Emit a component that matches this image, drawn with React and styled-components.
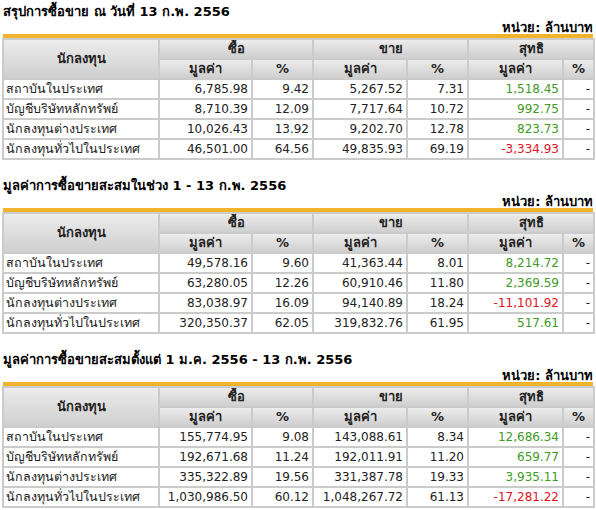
import React from "react"
import styled, { createGlobalStyle } from "styled-components"

const GlobalStyle = createGlobalStyle`
  body {
    margin: 0;
    padding: 3px 3px 0 2px;
    background: #ffffff;
    font-family: "DejaVu Sans", "Liberation Sans", "Noto Sans", sans-serif;
    font-size: 12px;
    color: #000;
  }
`

const Section = styled.section`
  margin-bottom: 17px;
`

const Title = styled.h2`
  margin: 0 0 0 1px;
  font-size: 13px;
  font-weight: bold;
  line-height: 18px;
  height: 18px;
`

const Unit = styled.div`
  text-align: right;
  font-weight: bold;
  font-size: 13px;
  line-height: 13px;
  height: 13px;
`

const Rule = styled.div`
  height: 4px;
  background: #f0b32c;
  margin-left: 1px;
`

const Table = styled.table`
  width: 591px;
  border-collapse: separate;
  border-spacing: 2px;
  background: #cbcbcb;
  table-layout: fixed;
`

const Th = styled.th`
  background: linear-gradient(#ececec, #cfcfcf);
  font-weight: bold;
  font-size: 13px;
  height: ${(p) => (p.$tall ? "38px" : "18px")};
  line-height: 16px;
  padding: 0;
  text-align: center;
  color: #222;
  overflow: hidden;
`

const Td = styled.td`
  background: #fff;
  height: 18px;
  line-height: 16px;
  padding: 0 3px 0 2px;
  font-size: ${(p) => (p.$left ? "12.5px" : "12px")};
  text-align: ${(p) => (p.$left ? "left" : "right")};
  color: ${(p) => p.$color || "#222"};
  white-space: nowrap;
  overflow: hidden;
`

const widths = [154, 91, 59, 92, 59, 93, 29]

const netColor = (v) => (v.startsWith("-") ? "#e0141e" : "#3f9a26")

const data = [
  {
    title: "สรุปการซื้อขาย ณ วันที่ 13 ก.พ. 2556",
    rows: [
      ["สถาบันในประเทศ", "6,785.98", "9.42", "5,267.52", "7.31", "1,518.45"],
      ["บัญชีบริษัทหลักทรัพย์", "8,710.39", "12.09", "7,717.64", "10.72", "992.75"],
      ["นักลงทุนต่างประเทศ", "10,026.43", "13.92", "9,202.70", "12.78", "823.73"],
      ["นักลงทุนทั่วไปในประเทศ", "46,501.00", "64.56", "49,835.93", "69.19", "-3,334.93"],
    ],
  },
  {
    title: "มูลค่าการซื้อขายสะสมในช่วง 1 - 13 ก.พ. 2556",
    rows: [
      ["สถาบันในประเทศ", "49,578.16", "9.60", "41,363.44", "8.01", "8,214.72"],
      ["บัญชีบริษัทหลักทรัพย์", "63,280.05", "12.26", "60,910.46", "11.80", "2,369.59"],
      ["นักลงทุนต่างประเทศ", "83,038.97", "16.09", "94,140.89", "18.24", "-11,101.92"],
      ["นักลงทุนทั่วไปในประเทศ", "320,350.37", "62.05", "319,832.76", "61.95", "517.61"],
    ],
  },
  {
    title: "มูลค่าการซื้อขายสะสมตั้งแต่ 1 ม.ค. 2556 - 13 ก.พ. 2556",
    rows: [
      ["สถาบันในประเทศ", "155,774.95", "9.08", "143,088.61", "8.34", "12,686.34"],
      ["บัญชีบริษัทหลักทรัพย์", "192,671.68", "11.24", "192,011.91", "11.20", "659.77"],
      ["นักลงทุนต่างประเทศ", "335,322.89", "19.56", "331,387.78", "19.33", "3,935.11"],
      ["นักลงทุนทั่วไปในประเทศ", "1,030,986.50", "60.12", "1,048,267.72", "61.13", "-17,281.22"],
    ],
  },
]

const SummaryTable = ({ title, rows }) => (
  <Section>
    <Title>{title}</Title>
    <Unit>หน่วย: ล้านบาท</Unit>
    <Rule />
    <Table>
      <colgroup>
        {widths.map((w, i) => (
          <col key={i} style={{ width: w }} />
        ))}
      </colgroup>
      <thead>
        <tr>
          <Th rowSpan={2} $tall>
            นักลงทุน
          </Th>
          <Th colSpan={2}>ซื้อ</Th>
          <Th colSpan={2}>ขาย</Th>
          <Th colSpan={2}>สุทธิ</Th>
        </tr>
        <tr>
          <Th>มูลค่า</Th>
          <Th>%</Th>
          <Th>มูลค่า</Th>
          <Th>%</Th>
          <Th>มูลค่า</Th>
          <Th>%</Th>
        </tr>
      </thead>
      <tbody>
        {rows.map((r) => (
          <tr key={r[0]}>
            <Td $left>{r[0]}</Td>
            <Td>{r[1]}</Td>
            <Td>{r[2]}</Td>
            <Td>{r[3]}</Td>
            <Td>{r[4]}</Td>
            <Td $color={netColor(r[5])}>{r[5]}</Td>
            <Td>-</Td>
          </tr>
        ))}
      </tbody>
    </Table>
  </Section>
)

export default function App() {
  return (
    <>
      <GlobalStyle />
      {data.map((d) => (
        <SummaryTable key={d.title} {...d} />
      ))}
    </>
  )
}
